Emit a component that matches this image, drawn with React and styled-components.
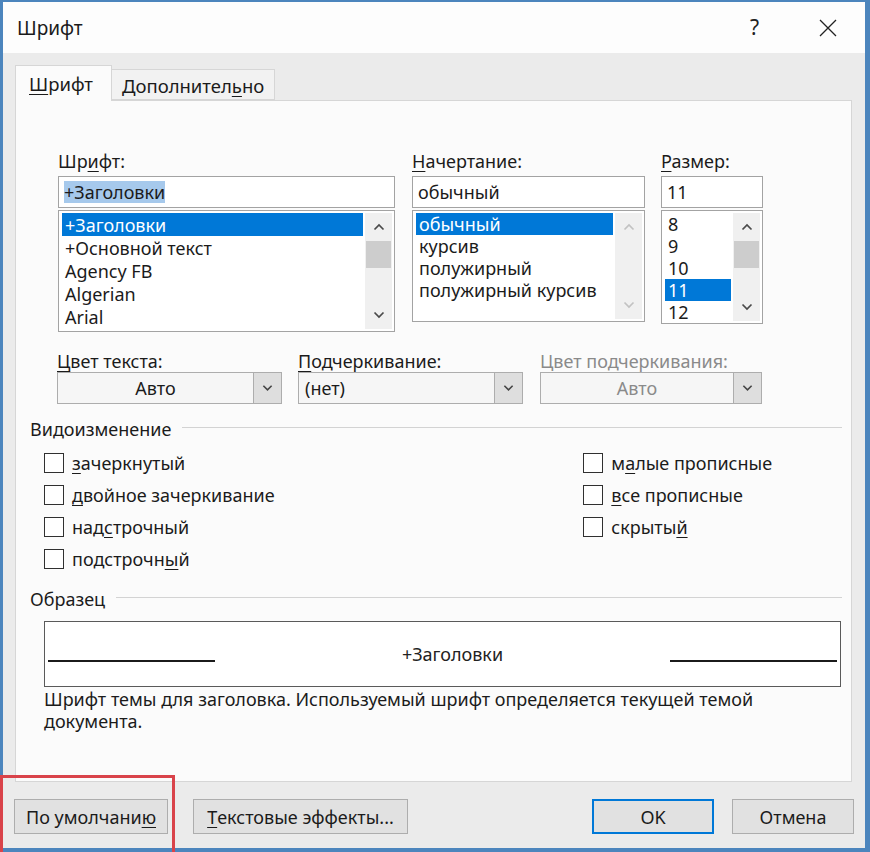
import React from "react";
import styled, { createGlobalStyle } from "styled-components";

const Global = createGlobalStyle`
  html, body { margin: 0; padding: 0; background: #ffffff; }
  body { font-family: "Noto Sans", "Open Sans", "DejaVu Sans", sans-serif; color: #1b1b1b; }
  * { box-sizing: border-box; }
  u { text-decoration: underline; text-decoration-thickness: 1px; text-underline-offset: 3px; }
`;

const Screen = styled.div`
  position: relative;
  width: 870px;
  height: 852px;
  overflow: hidden;
`;

const Window = styled.div`
  width: 870px;
  height: 852px;
  border: 3px solid #4c85bd;
  border-top-width: 2px;
  border-right-width: 5px;
  border-bottom-width: 4px;
  background: #ebebeb;
  display: flex;
  flex-direction: column;
`;

const TitleBar = styled.div`
  height: 51px;
  flex: none;
  background: #fdfdfd;
  display: flex;
  align-items: center;
  padding: 0 28px 0 14px;
  font-size: 19px;
`;

const Title = styled.div`
  flex: 1;
`;

const TitleControls = styled.div`
  display: flex;
  align-items: center;
  gap: 60px;
  color: #222;
`;

const Help = styled.span`
  font-size: 21px;
  line-height: 1;
`;

const Body = styled.div`
  flex: 1;
  display: flex;
  flex-direction: column;
  padding: 12px 13px 0 12px;
`;

const TabRow = styled.div`
  height: 35px;
  display: flex;
  align-items: flex-end;
`;

const Tab = styled.div`
  position: relative;
  z-index: ${(p) => (p.$active ? 2 : 1)};
  height: ${(p) => (p.$active ? 36 : 31)}px;
  margin-bottom: ${(p) => (p.$active ? -1 : 0)}px;
  padding: ${(p) => (p.$active ? "0 18px 0 13px" : "2px 10px 0 10px")};
  background: ${(p) => (p.$active ? "#fbfbfb" : "#f2f2f2")};
  border: 1px solid #d6d6d6;
  border-bottom: ${(p) => (p.$active ? "none" : "1px solid #d6d6d6")};
  border-left: ${(p) => (p.$active ? "1px solid #d6d6d6" : "none")};
  display: flex;
  align-items: center;
  font-size: 18.5px;
`;

const Panel = styled.div`
  height: 682px;
  background: #fbfbfb;
  border: 1px solid #d6d6d6;
  padding: 49px 9px 0 14px;
  display: flex;
  flex-direction: column;
  font-size: 18px;
  line-height: 22px;
`;

const FontRow = styled.div`
  display: flex;
  align-items: flex-start;
  padding-left: ${(p) => p.$indent}px;
  gap: ${(p) => p.$gap}px;
  margin-top: ${(p) => p.$top || 0}px;
`;

const Field = styled.div`
  width: ${(p) => p.$w}px;
  margin-left: ${(p) => p.$shift || 0}px;
  display: flex;
  flex-direction: column;
`;

const Label = styled.div`
  height: 22px;
  margin-bottom: ${(p) => p.$mb ?? 4}px;
  color: ${(p) => (p.$disabled ? "#8a8a8a" : "#1b1b1b")};
  white-space: nowrap;
`;

const TextInput = styled.div`
  height: 32px;
  border: 1px solid #a3a3a3;
  background: #ffffff;
  display: flex;
  align-items: center;
  padding-left: 5px;
`;

const Highlight = styled.span`
  background: #a6c9ec;
  line-height: 22px;
`;

const ListBox = styled.div`
  height: ${(p) => p.$h}px;
  margin-top: 2px;
  border: 1px solid #a3a3a3;
  background: #ffffff;
  padding: 2px 2px 2px 3px;
  display: flex;
  gap: 2px;
`;

const Items = styled.div`
  flex: 1;
  display: flex;
  flex-direction: column;
`;

const Item = styled.div`
  height: ${(p) => p.$rh}px;
  flex: none;
  display: flex;
  align-items: center;
  line-height: 18px;
  padding-left: 3px;
  white-space: nowrap;
  background: ${(p) => (p.$sel ? "#0078d7" : "transparent")};
  color: ${(p) => (p.$sel ? "#ffffff" : "#1b1b1b")};
`;

const ScrollBar = styled.div`
  width: 27px;
  flex: none;
  background: #f0f0f0;
  display: flex;
  flex-direction: column;
`;

const ScrollArrow = styled.div`
  height: 28px;
  flex: none;
  display: flex;
  align-items: center;
  justify-content: center;
`;

const Track = styled.div`
  flex: 1;
`;

const Thumb = styled.div`
  height: 27px;
  margin: 0 1px;
  background: #cdcdcd;
`;

const Select = styled.div`
  height: 32px;
  border: 1px solid #adadad;
  background: #f6f6f6;
  display: flex;
`;

const SelectValue = styled.div`
  flex: 1;
  display: flex;
  align-items: center;
  justify-content: ${(p) => (p.$center ? "center" : "flex-start")};
  padding: 0 6px;
  color: ${(p) => (p.$disabled ? "#8a8a8a" : "#1b1b1b")};
`;

const SelectButton = styled.div`
  width: 28px;
  flex: none;
  background: #dedede;
  border-left: 1px solid #adadad;
  display: flex;
  align-items: center;
  justify-content: center;
`;

const SectionHeader = styled.div`
  display: flex;
  align-items: center;
  gap: 11px;
  height: 22px;
  margin-top: ${(p) => p.$top}px;
  &::after {
    content: "";
    flex: 1;
    height: 1px;
    background: #d3d3d3;
    transform: translateY(-2px);
  }
`;

const Checks = styled.div`
  display: flex;
  padding-left: 14px;
  margin-top: 7px;
`;

const CheckColumn = styled.div`
  width: ${(p) => p.$w}px;
  display: flex;
  flex-direction: column;
`;

const CheckRow = styled.div`
  height: 32px;
  display: flex;
  align-items: center;
  gap: 8px;
  white-space: nowrap;
`;

const Box = styled.span`
  width: 20px;
  height: 20px;
  flex: none;
  border: 1.7px solid #303030;
  background: #ffffff;
`;

const Sample = styled.div`
  height: 66px;
  margin: 11px 1px 0 14px;
  border: 1px solid #5a5a5a;
  background: #ffffff;
  display: flex;
  align-items: center;
  padding: 0 3px;
`;

const SampleLine = styled.div`
  width: 167px;
  height: 1.5px;
  background: #1b1b1b;
  margin-top: 14px;
`;

const SampleText = styled.div`
  flex: 1;
  text-align: center;
  padding-left: 20px;
  font-size: 18px;
  color: #222;
`;

const Description = styled.div`
  margin: 1px 0 0 14px;
  width: 760px;
`;

const Footer = styled.div`
  height: 66px;
  flex: none;
  display: flex;
  align-items: flex-start;
  padding: 17px 11px 0 11px;
  margin: 0 -13px 0 -12px;
`;

const Button = styled.div`
  width: ${(p) => p.$w}px;
  height: 35px;
  margin-right: ${(p) => p.$mr || 0}px;
  margin-left: ${(p) => (p.$push ? "auto" : "0")};
  background: #e1e1e1;
  border: ${(p) => (p.$primary ? "2px solid #0078d7" : "1px solid #adadad")};
  display: flex;
  align-items: center;
  justify-content: center;
  font-size: 18px;
  color: #1b1b1b;
  white-space: nowrap;
`;

const Annotation = styled.div`
  position: absolute;
  left: 0;
  top: 775px;
  width: 175px;
  height: 90px;
  border: 3px solid #d9434a;
  pointer-events: none;
`;

const Chevron = ({ up, color = "#555", w = 12 }) => (
  <svg width={w} height="8" viewBox="0 0 12 8">
    <path
      d={up ? "M1.5 6.5 L6 2 L10.5 6.5" : "M1.5 1.5 L6 6 L10.5 1.5"}
      fill="none"
      stroke={color}
      strokeWidth="1.7"
    />
  </svg>
);

const Close = () => (
  <svg width="18" height="18" viewBox="0 0 18 18">
    <path d="M1 1 L17 17 M17 1 L1 17" stroke="#222" strokeWidth="1.3" fill="none" />
  </svg>
);

const Scroll = ({ thumb, disabled }) => (
  <ScrollBar>
    <ScrollArrow>
      <Chevron up color={disabled ? "#c2c2c2" : "#4a4a4a"} />
    </ScrollArrow>
    {thumb && <Thumb />}
    <Track />
    <ScrollArrow>
      <Chevron color={disabled ? "#c2c2c2" : "#4a4a4a"} />
    </ScrollArrow>
  </ScrollBar>
);

const List = ({ h, rh, items, selected, thumb, disabled }) => (
  <ListBox $h={h}>
    <Items>
      {items.map((it) => (
        <Item key={it} $rh={rh} $sel={it === selected}>
          {it}
        </Item>
      ))}
    </Items>
    <Scroll thumb={thumb} disabled={disabled} />
  </ListBox>
);

const Dropdown = ({ value, center, disabled }) => (
  <Select>
    <SelectValue $center={center} $disabled={disabled}>
      {value}
    </SelectValue>
    <SelectButton>
      <Chevron color="#444" w={11} />
    </SelectButton>
  </Select>
);

const Check = ({ children }) => (
  <CheckRow>
    <Box />
    <span>{children}</span>
  </CheckRow>
);

export default function App() {
  return (
    <Screen>
      <Global />
      <Window>
        <TitleBar>
          <Title>Шрифт</Title>
          <TitleControls>
            <Help>?</Help>
            <Close />
          </TitleControls>
        </TitleBar>
        <Body>
          <TabRow>
            <Tab $active>
              <span>
                <u>Ш</u>рифт
              </span>
            </Tab>
            <Tab>
              <span>
                Дополнител<u>ь</u>но
              </span>
            </Tab>
          </TabRow>
          <Panel>
            <FontRow $indent={28} $gap={17}>
              <Field $w={337}>
                <Label>
                  Шр<u>и</u>фт:
                </Label>
                <TextInput>
                  <Highlight>+Заголовки</Highlight>
                </TextInput>
                <List
                  h={122}
                  rh={23}
                  items={["+Заголовки", "+Основной текст", "Agency FB", "Algerian", "Arial"]}
                  selected="+Заголовки"
                  thumb
                />
              </Field>
              <Field $w={233}>
                <Label>
                  <u>Н</u>ачертание:
                </Label>
                <TextInput>обычный</TextInput>
                <List
                  h={112}
                  rh={22}
                  items={["обычный", "курсив", "полужирный", "полужирный курсив"]}
                  selected="обычный"
                  disabled
                />
              </Field>
              <Field $w={102} $shift={-1}>
                <Label>
                  <u>Р</u>азмер:
                </Label>
                <TextInput>11</TextInput>
                <List
                  h={114}
                  rh={22}
                  items={["8", "9", "10", "11", "12"]}
                  selected="11"
                  thumb
                />
              </Field>
            </FontRow>

            <FontRow $indent={27} $gap={16} $top={18}>
              <Field $w={225}>
                <Label $mb={0}>
                  <u>Ц</u>вет текста:
                </Label>
                <Dropdown value="Авто" center />
              </Field>
              <Field $w={225}>
                <Label $mb={0}>
                  <u>П</u>одчеркивание:
                </Label>
                <Dropdown value="(нет)" />
              </Field>
              <Field $w={222} $shift={1}>
                <Label $mb={0} $disabled>
                  Цвет подчеркивания:
                </Label>
                <Dropdown value="Авто" center disabled />
              </Field>
            </FontRow>

            <SectionHeader $top={14}>Видоизменение</SectionHeader>
            <Checks>
              <CheckColumn $w={542}>
                <Check>
                  <u>з</u>ачеркнутый
                </Check>
                <Check>
                  <u>д</u>войное зачеркивание
                </Check>
                <Check>
                  над<u>с</u>трочный
                </Check>
                <Check>
                  подстрочн<u>ы</u>й
                </Check>
              </CheckColumn>
              <CheckColumn $w={260}>
                <Check>
                  м<u>а</u>лые прописные
                </Check>
                <Check>
                  <u>в</u>се прописные
                </Check>
                <Check>
                  скрыты<u>й</u>
                </Check>
              </CheckColumn>
            </Checks>

            <SectionHeader $top={13}>Образец</SectionHeader>
            <Sample>
              <SampleLine />
              <SampleText>+Заголовки</SampleText>
              <SampleLine />
            </Sample>
            <Description>
              Шрифт темы для заголовка. Используемый шрифт определяется текущей темой документа.
            </Description>
          </Panel>
          <Footer>
            <Button $w={154} $mr={25}>
              По умолчани<u>ю</u>
            </Button>
            <Button $w={215}>
              <u>Т</u>екстовые эффекты...
            </Button>
            <Button $w={122} $mr={18} $push $primary>
              OK
            </Button>
            <Button $w={122}>Отмена</Button>
          </Footer>
        </Body>
      </Window>
      <Annotation />
    </Screen>
  );
}
